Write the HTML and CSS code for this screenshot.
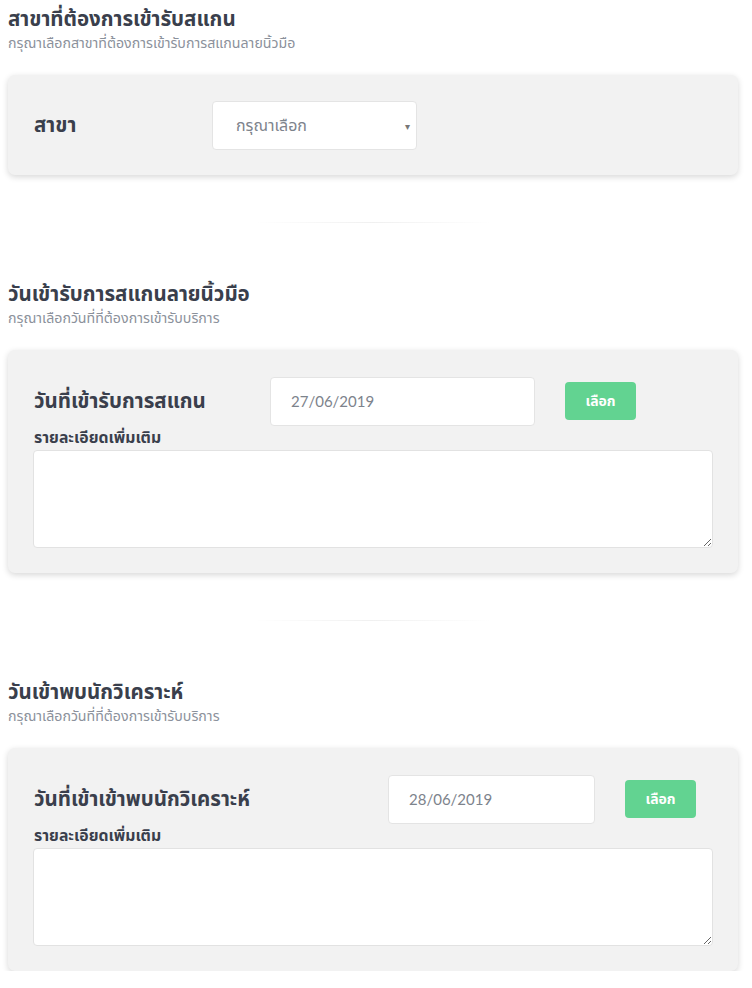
FILE: index.html
```html
<!DOCTYPE html>
<html lang="th">
<head>
<meta charset="utf-8">
<link rel="stylesheet" href="styles.css">
</head>
<body>
<main class="page">
  <section class="block block-first">
    <h2 class="title">สาขาที่ต้องการเข้ารับสแกน</h2>
    <p class="subtitle">กรุณาเลือกสาขาที่ต้องการเข้ารับการสแกนลายนิ้วมือ</p>
    <div class="card card-branch">
      <label class="row-label">สาขา</label>
      <div class="select">
        <span class="select-text">กรุณาเลือก</span>
        <span class="select-arrow">▾</span>
      </div>
    </div>
  </section>

  <hr class="sep">

  <section class="block">
    <h2 class="title">วันเข้ารับการสแกนลายนิ้วมือ</h2>
    <p class="subtitle">กรุณาเลือกวันที่ที่ต้องการเข้ารับบริการ</p>
    <div class="card">
      <div class="date-row row-scan">
        <label class="row-label">วันที่เข้ารับการสแกน</label>
        <div class="input">27/06/2019</div>
        <button class="btn">เลือก</button>
      </div>
      <label class="small-label">รายละเอียดเพิ่มเติม</label>
      <textarea class="textarea"></textarea>
    </div>
  </section>

  <hr class="sep">

  <section class="block">
    <h2 class="title">วันเข้าพบนักวิเคราะห์</h2>
    <p class="subtitle">กรุณาเลือกวันที่ที่ต้องการเข้ารับบริการ</p>
    <div class="card">
      <div class="date-row row-meet">
        <label class="row-label">วันที่เข้าเข้าพบนักวิเคราะห์</label>
        <div class="input">28/06/2019</div>
        <button class="btn">เลือก</button>
      </div>
      <label class="small-label">รายละเอียดเพิ่มเติม</label>
      <textarea class="textarea"></textarea>
    </div>
  </section>
</main>
</body>
</html>
```

FILE: styles.css
```css
* { box-sizing: border-box; }
html, body { margin: 0; padding: 0; background: #fff; }
body {
  font-family: Lato, "Noto Sans Thai", "Noto Sans", sans-serif;
  color: #3b4050;
}
.page { padding: 0 14px 0 8px; }
.block { display: flex; flex-direction: column; }
.block-first { padding-top: 4px; }
.title {
  margin: 0;
  font-size: 20.5px;
  font-weight: 700;
  line-height: 28px;
  color: #3a3f4c;
}
.subtitle {
  margin: 0;
  font-size: 14.2px;
  line-height: 22px;
  color: #8b919b;
}
.card {
  margin-top: 21px;
  background: #f2f2f2;
  border-radius: 7px;
  box-shadow: 0 2px 6px rgba(0, 0, 0, 0.16);
  padding: 27px 24px 25px 26px;
  display: flex;
  flex-direction: column;
}
.card-branch {
  flex-direction: row;
  align-items: center;
  height: 100px;
  padding-top: 26px;
}
.card-branch .row-label { width: 178px; }
.row-label {
  font-size: 20.5px;
  font-weight: 700;
  color: #3a3f4c;
}
.select {
  width: 205px;
  height: 49px;
  background: #fff;
  border: 1px solid #e4e4e4;
  border-radius: 4px;
  display: flex;
  align-items: center;
  justify-content: space-between;
  padding: 0 6px 0 23px;
}
.select-text { font-size: 16px; color: #7d838c; }
.select-arrow { font-size: 10px; color: #777; }
.sep {
  margin: 47px auto 0;
  width: 240px;
  height: 1px;
  border: 0;
  background: linear-gradient(to right, rgba(0,0,0,0), rgba(0,0,0,0.06), rgba(0,0,0,0));
}
.sep + .block { margin-top: 56px; }
.date-row {
  display: flex;
  align-items: center;
  height: 48px;
}
.row-scan .row-label { width: 236px; }
.row-scan .input { width: 265px; }
.row-scan .btn { margin-left: 30px; }
.row-meet .row-label { width: 354px; }
.row-meet .input { width: 207px; }
.row-meet .btn { margin-left: 30px; }
.input {
  height: 49px;
  background: #fff;
  border: 1px solid #e4e4e4;
  border-radius: 4px;
  display: flex;
  align-items: center;
  padding-left: 20px;
  font-size: 15px;
  color: #7d838c;
}
.btn {
  width: 71px;
  height: 38px;
  border: 0;
  border-radius: 4px;
  background: #62d391;
  color: #fff;
  font-family: inherit;
  font-size: 14px;
  font-weight: 700;
  padding: 0;
}
.small-label {
  margin-top: 2px;
  font-size: 15.8px;
  font-weight: 700;
  line-height: 20px;
  color: #3a3f4c;
}
.textarea {
  margin-top: 3px;
  margin-left: -1px;
  width: 680px;
  height: 98px;
  background: #fff;
  border: 1px solid #e2e2e2;
  border-radius: 4px;
  resize: vertical;
}
```
